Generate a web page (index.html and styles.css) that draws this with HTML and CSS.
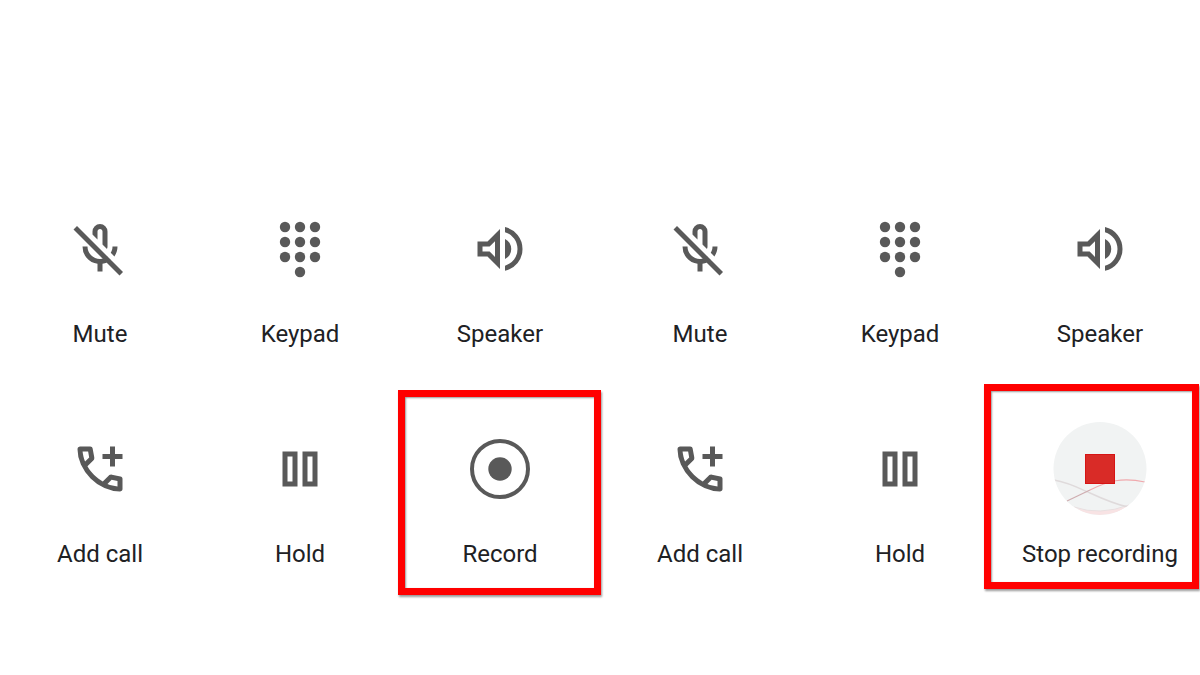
FILE: index.html
```html
<!DOCTYPE html>
<html lang="en">
<head>
    <meta charset="UTF-8">
    <meta name="viewport" content="width=device-width, initial-scale=1.0">
    <title>Call recording</title>
    <link rel="stylesheet" href="styles.css">
</head>
<body>
    <!-- Shared icons -->
    <svg class="icon-defs" aria-hidden="true">
        <symbol id="icon-mute" viewBox="0 -960 960 960">
            <path d="m710-362-58-58q14-23 21-48t7-52h80q0 44-13 83.5T710-362ZM592-482l-72-72v-206q0-17-11.5-28.5T480-800q-17 0-28.5 11.5T440-760v126l-80-80v-46q0-50 35-85t85-35q50 0 85 35t35 85v240q0 11-2.5 20t-5.5 18ZM440-120v-123q-104-14-172-93t-68-184h80q0 83 57.5 141.5T480-320q34 0 64.5-10.5T600-360l57 57q-29 23-63.5 39T520-243v123h-80Zm352 64L56-792l56-56 736 736-56 56Z"/>
        </symbol>
        <symbol id="icon-keypad" viewBox="0 0 60 60">
            <circle cx="15" cy="8" r="5.2"/><circle cx="30" cy="8" r="5.2"/><circle cx="45" cy="8" r="5.2"/>
            <circle cx="15" cy="23" r="5.2"/><circle cx="30" cy="23" r="5.2"/><circle cx="45" cy="23" r="5.2"/>
            <circle cx="15" cy="38" r="5.2"/><circle cx="30" cy="38" r="5.2"/><circle cx="45" cy="38" r="5.2"/>
            <circle cx="30" cy="53" r="5.2"/>
        </symbol>
        <symbol id="icon-speaker" viewBox="0 -960 960 960">
            <path d="M560-131v-82q90-26 145-100t55-168q0-94-55-168T560-749v-82q124 28 202 125.5T840-481q0 127-78 224.5T560-131ZM120-360v-240h160l200-200v640L280-360H120Zm440 40v-322q47 22 73.5 66t26.5 96q0 51-26.5 94.5T560-320ZM400-606l-86 86H200v80h114l86 86v-252Z"/>
        </symbol>
        <symbol id="icon-add-call" viewBox="0 -960 960 960">
            <path d="M640-520v-120H520v-80h120v-120h80v120h120v80H720v120h-80Z"/>
            <path d="M798-120q-125 0-247-54.5T329-329Q229-429 174.5-551T120-798q0-18 12-30t30-12h162q14 0 25 9.5t13 22.5l26 140q2 16-1 27t-11 19l-97 98q20 37 47.5 71.5T387-386q31 31 65 57.5t72 48.5l94-94q9-9 23.5-13.5T670-390l138 28q14 4 23 14.5t9 23.5v162q0 18-12 30t-30 12ZM241-600l66-66-17-94h-89q5 41 14 81t26 79Zm358 358q39 17 79.5 27t81.5 13v-88l-94-19-67 67Z"/>
        </symbol>
        <symbol id="icon-hold" viewBox="0 -960 960 960">
            <path d="M520-200v-560h240v560H520Zm-320 0v-560h240v560H200Zm400-80h80v-400h-80v400Zm-320 0h80v-400h-80v400Z"/>
        </symbol>
    </svg>

    <main class="screens">
        <!-- Before recording -->
        <section class="call-controls">
            <button class="control" type="button">
                <span class="control-icon"><svg class="icon"><use href="#icon-mute"/></svg></span>
                <span class="control-label">Mute</span>
            </button>
            <button class="control" type="button">
                <span class="control-icon"><svg class="icon"><use href="#icon-keypad"/></svg></span>
                <span class="control-label">Keypad</span>
            </button>
            <button class="control" type="button">
                <span class="control-icon"><svg class="icon"><use href="#icon-speaker"/></svg></span>
                <span class="control-label">Speaker</span>
            </button>
            <button class="control" type="button">
                <span class="control-icon"><svg class="icon"><use href="#icon-add-call"/></svg></span>
                <span class="control-label">Add call</span>
            </button>
            <button class="control" type="button">
                <span class="control-icon"><svg class="icon"><use href="#icon-hold"/></svg></span>
                <span class="control-label">Hold</span>
            </button>
            <button class="control highlight" type="button">
                <span class="control-icon">
                    <svg class="icon" viewBox="0 0 60 60">
                        <circle cx="30" cy="30" r="28" fill="none" stroke="currentColor" stroke-width="4"/>
                        <circle cx="30" cy="30" r="11.7"/>
                    </svg>
                </span>
                <span class="control-label">Record</span>
            </button>
        </section>

        <!-- While recording -->
        <section class="call-controls">
            <button class="control" type="button">
                <span class="control-icon"><svg class="icon"><use href="#icon-mute"/></svg></span>
                <span class="control-label">Mute</span>
            </button>
            <button class="control" type="button">
                <span class="control-icon"><svg class="icon"><use href="#icon-keypad"/></svg></span>
                <span class="control-label">Keypad</span>
            </button>
            <button class="control" type="button">
                <span class="control-icon"><svg class="icon"><use href="#icon-speaker"/></svg></span>
                <span class="control-label">Speaker</span>
            </button>
            <button class="control" type="button">
                <span class="control-icon"><svg class="icon"><use href="#icon-add-call"/></svg></span>
                <span class="control-label">Add call</span>
            </button>
            <button class="control" type="button">
                <span class="control-icon"><svg class="icon"><use href="#icon-hold"/></svg></span>
                <span class="control-label">Hold</span>
            </button>
            <button class="control highlight highlight-wide" type="button">
                <span class="control-icon">
                    <svg class="icon-stop" viewBox="0 0 96 96">
                        <clipPath id="stop-disc"><circle cx="48" cy="47.5" r="46.5"/></clipPath>
                        <g clip-path="url(#stop-disc)" fill="none">
                            <rect width="96" height="96" fill="#f1f3f3"/>
                            <path d="M24 87q24 7 52-2-10 8-28 9-14 0-24-7Z" fill="#f8e3e4"/>
                            <path d="M22 86q26 9 55-2" stroke="#e8dfe0"/>
                            <path d="M2 59c13 2 23 7 36 13s24 11 38 14" stroke="#dfdadb" stroke-width="1.4"/>
                            <path d="M15 80 38 69" stroke="#cfadb0" stroke-width="1.2"/>
                            <path d="M38 69c18-9 32-13 55-8" stroke="#f0a9ad" stroke-width="1.2"/>
                        </g>
                        <rect x="33.5" y="33.5" width="29" height="29" fill="#d92b27" stroke="#d61414"/>
                    </svg>
                </span>
                <span class="control-label">Stop recording</span>
            </button>
        </section>
    </main>
</body>
</html>
```

FILE: styles.css
```css
* {
    margin: 0;
    padding: 0;
    box-sizing: border-box;
}

body {
    min-height: 100vh;
    background: #fff;
    font-family: Roboto, 'Liberation Sans', sans-serif;
    overflow-x: hidden;
}

.icon-defs {
    display: none;
}

.screens {
    display: grid;
    grid-template-columns: 1fr 1fr;
    padding-top: 201px;
}

.call-controls {
    display: grid;
    grid-template-columns: repeat(3, 1fr);
    row-gap: 70px;
}

.control {
    position: relative;
    display: flex;
    flex-direction: column;
    align-items: center;
    gap: 20px;
    border: none;
    background: none;
    color: #595959;
    font-family: inherit;
    cursor: pointer;
}

.control-icon {
    display: flex;
    align-items: center;
    justify-content: center;
    height: 96px;
}

.icon {
    width: 60px;
    height: 60px;
    fill: currentColor;
}

.icon-stop {
    width: 96px;
    height: 96px;
}

.control-label {
    color: #202124;
    font-size: 24px;
    line-height: 34px;
    white-space: nowrap;
}

/* Red frame around the recording button */
.highlight::after {
    content: '';
    position: absolute;
    inset: -31px -1px -24px -2px;
    border: 7px solid #ff0000;
    box-shadow: 1px 2px 2px rgba(0, 0, 0, 0.4), inset 1px 1px 2px rgba(0, 0, 0, 0.4);
    pointer-events: none;
}

.highlight-wide::after {
    inset: -37px 1px -18px -16px;
}
```
